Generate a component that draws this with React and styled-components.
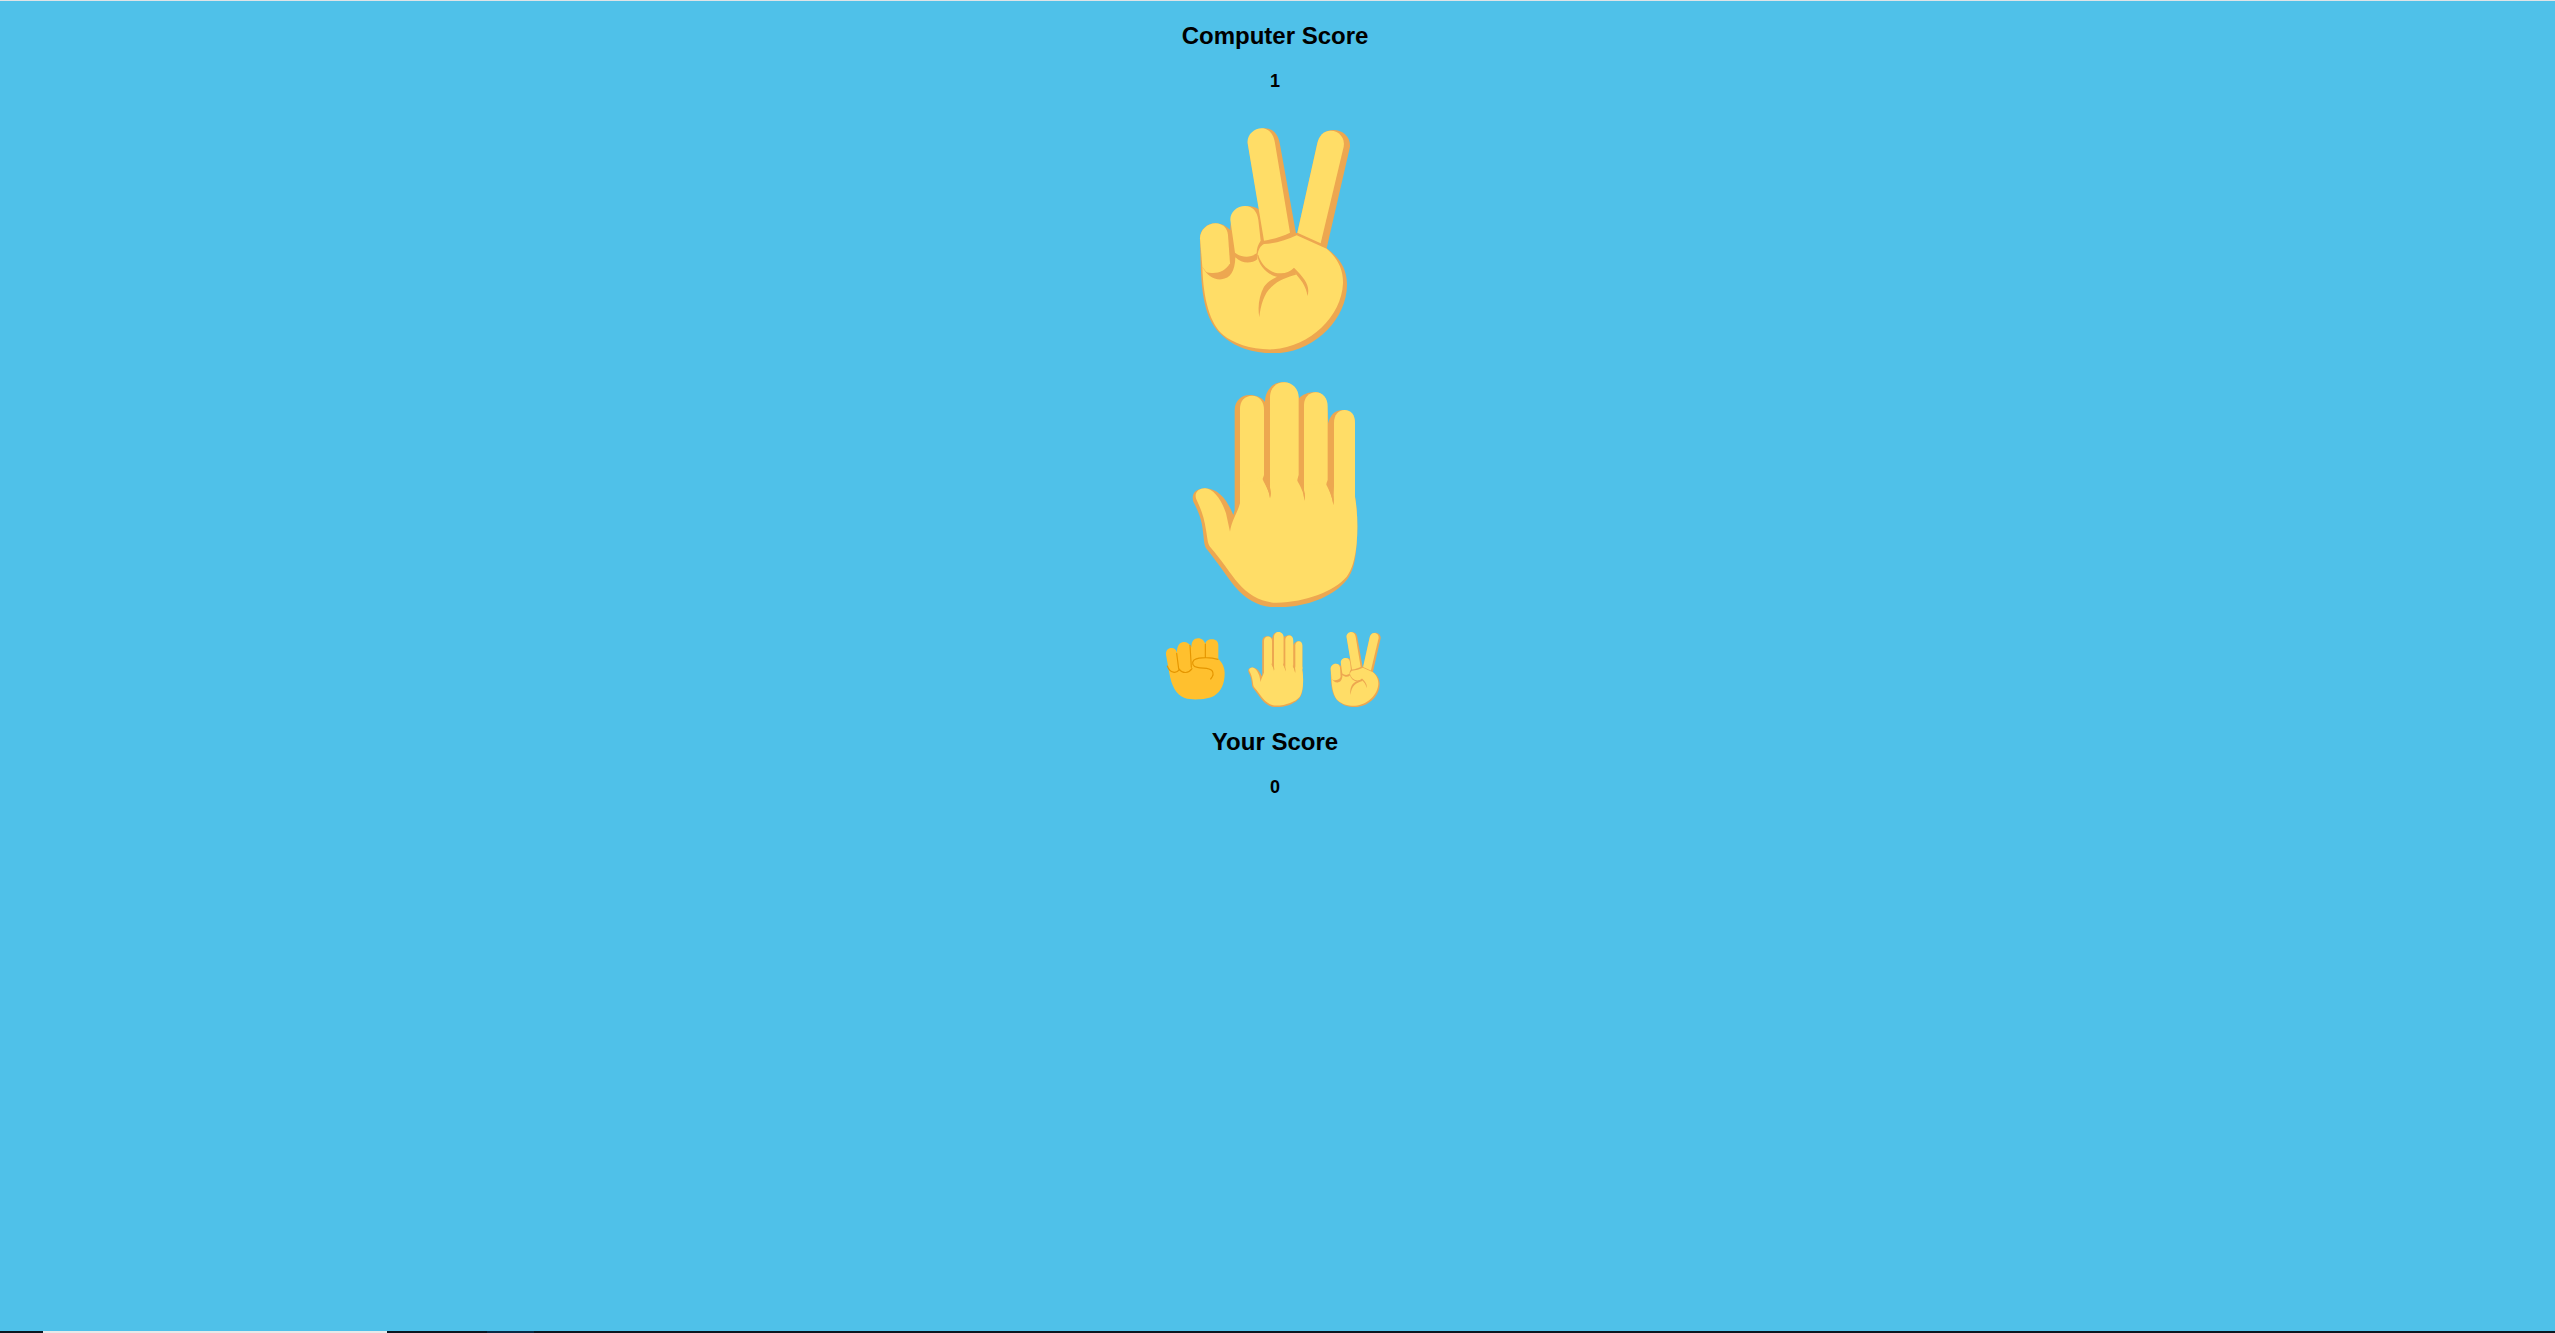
import React from 'react';
import styled, { createGlobalStyle } from 'styled-components';

const GlobalStyle = createGlobalStyle`
  html, body {
    margin: 0;
    padding: 0;
    height: 100%;
    overflow: hidden;
  }
  body {
    font-family: "Liberation Sans", Arial, sans-serif;
  }
`;

const Page = styled.div`
  display: flex;
  flex-direction: column;
  height: 100vh;
  background-color: #4fc1e9;
`;

const TopEdge = styled.div`
  flex: 0 0 1px;
  background-color: #dfe3e6;
`;

const Game = styled.main`
  flex: 1 1 auto;
  display: flex;
  flex-direction: column;
  align-items: center;
  padding: 21px 5px 0 0;
  color: #000;
`;

const Title = styled.h2`
  margin: 0 0 22px;
  font-size: 24px;
  line-height: 27px;
  font-weight: 700;
`;

const Score = styled.div`
  font-size: 18px;
  line-height: 20px;
  font-weight: 700;
`;

const Hands = styled.div`
  display: flex;
  flex-direction: column;
  align-items: center;
  gap: 29px;
  margin: 37px 0 25px 5px;
`;

const Picks = styled.div`
  display: flex;
  gap: 5px;
  margin: 0 0 21px 3px;
`;

const Pick = styled.button`
  display: block;
  padding: 0;
  border: 0;
  background: none;
  cursor: pointer;
`;

const HandSvg = styled.svg`
  display: block;
  width: ${(p) => p.$size}px;
  height: ${(p) => p.$size}px;
`;

const Taskbar = styled.div`
  flex: 0 0 2px;
  display: flex;
  background-color: #0b1620;
`;

const TaskItem = styled.div`
  flex: 0 0 ${(p) => p.$width}px;
  margin-right: ${(p) => p.$gap || 0}px;
  background-color: ${(p) => p.$color};
`;

const SHADE = '#eda750';
const SKIN = '#ffdd67';

const Peace = ({ size }) => (
  <HandSvg $size={size} viewBox="45 384 675 675">
    {/* outline colour first, the skin is laid over it */}
    <g fill={SHADE}>
      <path d="M345 385C368 386 384 402 389 428L438 700L442 698L502 430C508 405 525 390 550 390C580 390 602 412 600 440L530 745C565 770 592 805 591 855C590 960 490 1060 370 1060C300 1060 245 1035 215 1005C170 965 155 900 152 790L150 715C150 688 172 670 197 670C212 670 226 676 241 690C240 650 262 618 290 618C305 618 320 622 330 630L340 700L293 430C292 405 318 385 345 385Z" />
    </g>
    <g fill={SKIN}>
      <path d="M335 385C358 385 372 405 375 430L420 698C400 708 370 718 342 722L293 430C290 405 312 385 335 385Z" />
      <path d="M542 392C568 392 586 415 581 440L512 730L442 698L502 430C507 408 520 392 542 392Z" />
      <path d="M285 618C308 618 322 635 325 660L332 722C324 735 320 745 320 760C300 775 272 772 255 758L241 660C240 637 260 618 285 618Z" />
      <path d="M197 670C218 670 232 685 234 705L240 790C225 818 190 825 168 815L157 800L150 715C150 690 172 670 197 670Z" />
      <path d="M157 800C170 825 190 840 215 838C240 835 255 815 256 772C275 792 305 792 322 778C322 752 330 738 342 732C380 730 410 720 440 706L530 746C560 772 580 805 579 850C575 950 480 1040 370 1048C305 1050 250 1030 220 1005C180 970 160 900 157 800Z" />
    </g>
    <g fill={SHADE}>
      <path d="M322 765C325 800 360 832 395 832C410 832 425 825 432 817C450 835 470 860 472 888C482 860 465 835 432 803C420 815 405 821 390 820C365 820 335 800 325 765Z" />
      <path d="M434 812C395 822 360 835 342 860C328 885 322 920 328 952C332 915 342 880 365 860C385 840 415 830 438 824Z" />
    </g>
  </HandSvg>
);

const Paper = ({ size }) => (
  <HandSvg $size={size} viewBox="45 66 675 675">
    <path
      fill={SHADE}
      d="M254 150C254 122 275 105 298 105C318 105 335 112 345 125C345 90 370 66 398 66C420 66 440 80 447 115C455 105 475 96 495 96C515 96 530 108 534 165L535 190C540 165 555 150 578 150C600 150 615 165 615 190V410C622 450 624 500 620 550C617 600 610 635 590 660C550 710 470 742 380 742C330 742 290 720 255 680C230 650 205 610 168 565C160 550 162 525 155 490C150 465 140 445 130 425C122 400 140 385 165 385C205 385 232 420 250 465L254 450Z"
    />
    <g fill={SKIN}>
      <path d="M270 400V145C270 122 285 107 306 107C328 107 342 125 342 148V400Z" />
      <path d="M360 400V112C360 85 378 67 403 67C428 67 446 88 446 112V400Z" />
      <path d="M462 400V135C462 112 478 97 497 97C518 97 533 115 533 138V400Z" />
      <path d="M552 400V188C552 165 565 150 584 150C604 150 615 165 615 188V400Z" />
      <path d="M270 378L338 350C345 372 358 392 360 415L362 370L446 356C455 376 462 395 463 422L465 375L531 368C538 392 548 412 550 435L552 378L615 378V410C622 450 624 500 620 550C615 600 605 630 590 650C550 695 470 725 380 728C335 728 295 705 265 670C240 640 215 600 180 560C172 550 172 530 168 510C162 470 152 445 140 420C130 400 145 385 165 385C190 385 215 420 228 460L240 515C245 480 262 460 270 430Z" />
    </g>
    <g fill={SHADE}>
      <path d="M342 345C340 352 338 355 338 358C345 375 358 392 360 415C368 395 358 375 345 345Z" />
      <path d="M446 345C444 352 442 358 442 362C450 378 462 395 463 422C470 400 458 380 447 350Z" />
      <path d="M533 360C531 366 529 370 529 374C537 390 548 412 550 435C556 412 545 392 535 368Z" />
    </g>
  </HandSvg>
);

const Rock = ({ size }) => (
  <HandSvg $size={size} viewBox="27 66 225 225">
    <path
      fill="#ffc02e"
      d="M64 114C74 114 79 120 81 128C80 108 90 96 101 96C112 96 120 102 124 112C124 94 132 85 144 85C156 85 163 92 166 102C167 94 174 88 186 88C198 88 205 95 205 106V148C216 156 224 172 224 190C224 220 214 245 192 258C172 268 130 272 104 264C78 256 64 225 58 190L48 134C47 122 54 114 64 114Z"
    />
    <path
      fill="none"
      stroke="#e59600"
      strokeWidth="3.5"
      strokeLinecap="round"
      d="M80 130L86 176M52 168C60 190 80 192 88 178C98 192 116 190 126 176M120 106L124 172M166 102V142M204 148C185 142 150 140 132 150C124 158 128 170 142 172C160 176 178 172 186 182C192 190 188 200 182 207"
    />
  </HandSvg>
);

const App = () => (
  <Page>
    <GlobalStyle />
    <TopEdge />
    <Game>
      <Title>Computer Score</Title>
      <Score>1</Score>
      <Hands>
        <Peace size={225} />
        <Paper size={225} />
      </Hands>
      <Picks>
        <Pick aria-label="rock"><Rock size={75} /></Pick>
        <Pick aria-label="paper"><Paper size={75} /></Pick>
        <Pick aria-label="scissors"><Peace size={75} /></Pick>
      </Picks>
      <Title>Your Score</Title>
      <Score>0</Score>
    </Game>
    <Taskbar>
      <TaskItem $width={43} $color="#0b1620" />
      <TaskItem $width={344} $color="#e8e8e8" $gap={100} />
      <TaskItem $width={47} $color="#0a2a45" />
    </Taskbar>
  </Page>
);

export default App;
